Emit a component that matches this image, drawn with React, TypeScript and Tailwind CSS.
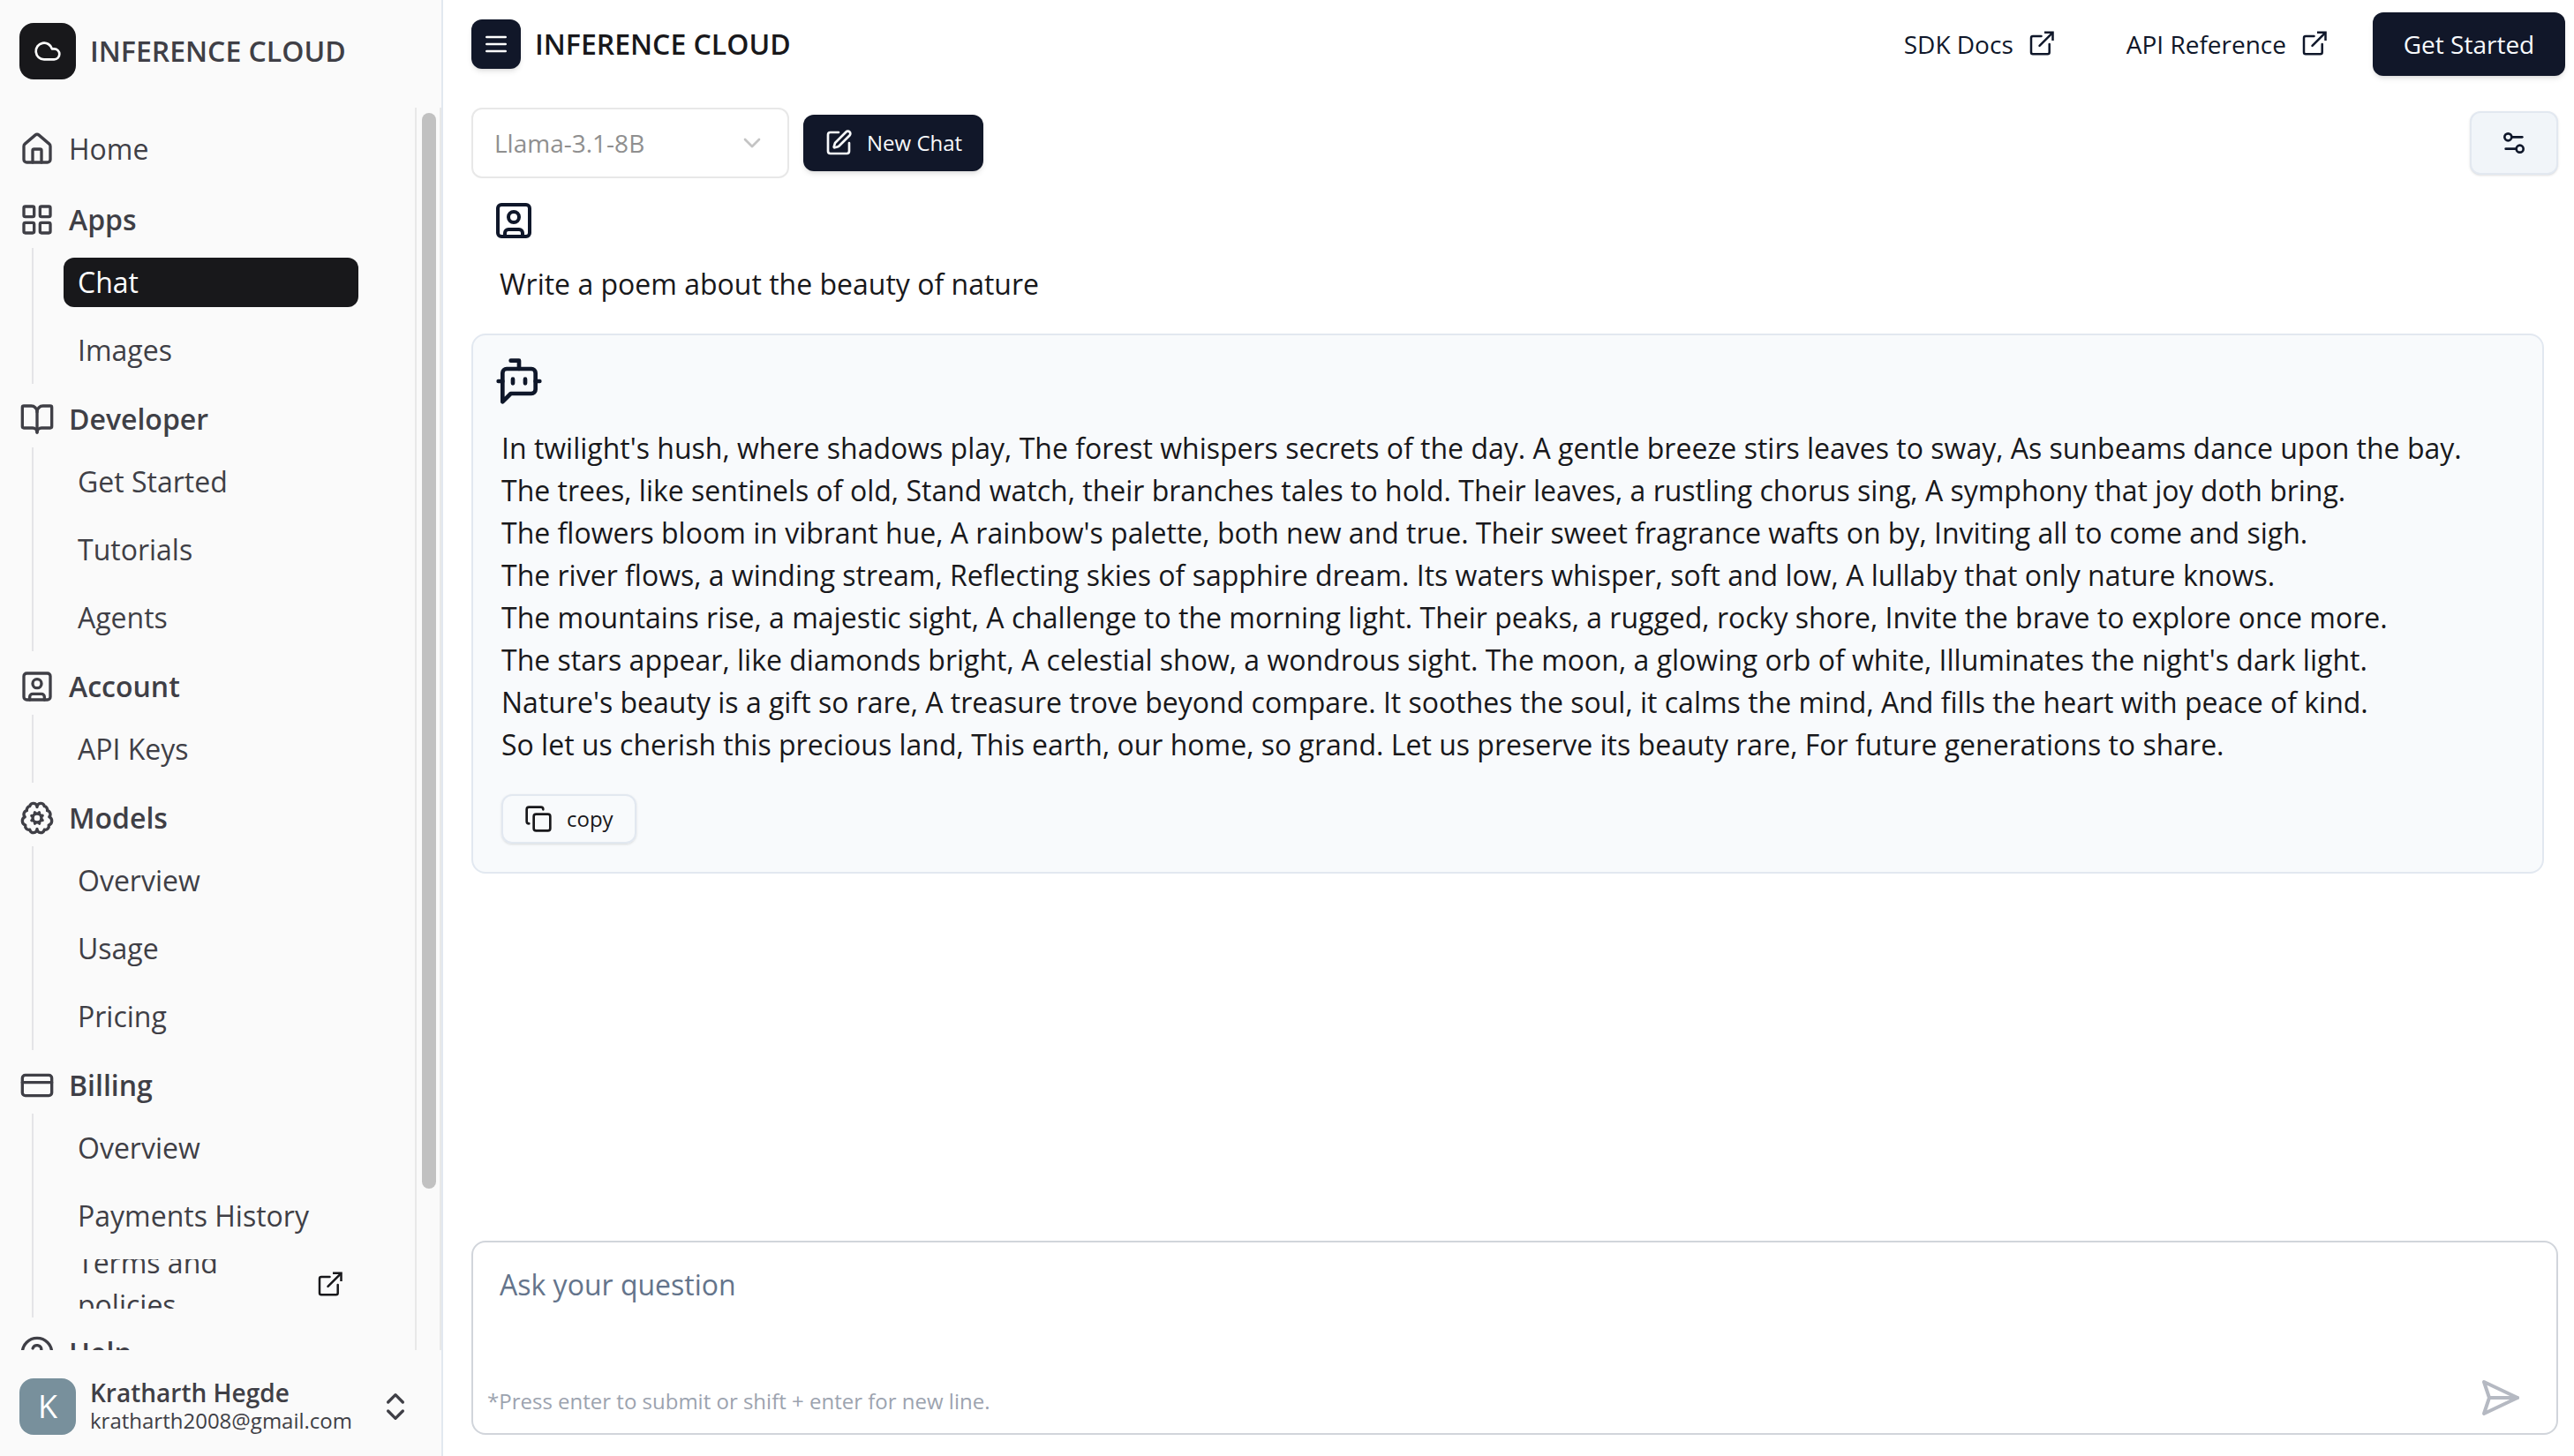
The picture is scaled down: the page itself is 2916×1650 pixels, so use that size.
import type { ComponentType, ReactNode } from 'react';
import {
  BookOpen,
  ChevronDown,
  ChevronsUpDown,
  CircleQuestionMark,
  Cloud,
  Copy,
  CreditCard,
  House,
  LayoutGrid,
  Settings2,
  SquarePen,
  SquareUser,
} from 'lucide-react';

type IconProps = { className?: string };

function StrokeIcon({ className, children }: { className?: string; children: ReactNode }) {
  return (
    <svg
      viewBox="0 0 24 24"
      fill="none"
      stroke="currentColor"
      strokeWidth="2"
      strokeLinecap="round"
      strokeLinejoin="round"
      aria-hidden="true"
      className={className}
    >
      {children}
    </svg>
  );
}

function BrainGear({ className }: IconProps) {
  return (
    <StrokeIcon className={className}>
      <path d="M12 4.5a2.5 2.5 0 0 0-4.96-.46 2.5 2.5 0 0 0-1.98 3 2.5 2.5 0 0 0-1.32 4.24 3 3 0 0 0 .34 5.58 2.5 2.5 0 0 0 2.96 3.08A2.5 2.5 0 0 0 12 19.5a2.5 2.5 0 0 0 4.96.44 2.5 2.5 0 0 0 2.96-3.08 3 3 0 0 0 .34-5.58 2.5 2.5 0 0 0-1.32-4.24 2.5 2.5 0 0 0-1.98-3A2.5 2.5 0 0 0 12 4.5" />
      <circle cx="12" cy="12" r="3" />
      <path d="m15.7 10.4-.9.4M9.2 13.2l-.9.4M13.6 15.7l-.4-.9M10.8 9.2l-.4-.9M15.7 13.5l-.9-.4M9.2 10.9l-.9-.4M10.5 15.7l.4-.9M13.1 9.2l.4-.9" />
    </StrokeIcon>
  );
}

function BotMessage({ className }: IconProps) {
  return (
    <StrokeIcon className={className}>
      <path d="M12 6V2H8" />
      <path d="m8 18-4 4V8a2 2 0 0 1 2-2h12a2 2 0 0 1 2 2v8a2 2 0 0 1-2 2Z" />
      <path d="M2 12h2M9 11v2M15 11v2M20 12h2" />
    </StrokeIcon>
  );
}

function SendArrow({ className }: IconProps) {
  return (
    <StrokeIcon className={className}>
      <path d="m3 3 3 9-3 9 19-9Z" />
      <path d="M6 12h16" />
    </StrokeIcon>
  );
}

function MenuLines({ className }: IconProps) {
  return (
    <StrokeIcon className={className}>
      <path d="M4 6h16M4 12h16M4 18h16" />
    </StrokeIcon>
  );
}

function OpenExternal({ className }: IconProps) {
  return (
    <svg
      viewBox="0 0 32 32"
      fill="none"
      stroke="currentColor"
      strokeWidth="2.5"
      aria-hidden="true"
      className={className}
    >
      <path
        strokeLinecap="round"
        strokeLinejoin="round"
        d="M15.5 8H6a2 2 0 0 0-2 2v16.3a2 2 0 0 0 2 2h16.7a2 2 0 0 0 2-2V17"
      />
      <path strokeLinecap="round" d="M13.5 18.8 28 4.3" />
      <path strokeLinejoin="miter" d="M19 3.7h9.5v9.3" />
    </svg>
  );
}

type NavItem = { label: string; active?: boolean; external?: boolean };
type NavGroup = { label: string; icon: ComponentType<IconProps>; items: NavItem[] };

const groups: NavGroup[] = [
  { label: 'Apps', icon: LayoutGrid, items: [{ label: 'Chat', active: true }, { label: 'Images' }] },
  {
    label: 'Developer',
    icon: BookOpen,
    items: [{ label: 'Get Started' }, { label: 'Tutorials' }, { label: 'Agents' }],
  },
  { label: 'Account', icon: SquareUser, items: [{ label: 'API Keys' }] },
  {
    label: 'Models',
    icon: BrainGear,
    items: [{ label: 'Overview' }, { label: 'Usage' }, { label: 'Pricing' }],
  },
  {
    label: 'Billing',
    icon: CreditCard,
    items: [
      { label: 'Overview' },
      { label: 'Payments History' },
      { label: 'Terms and policies', external: true },
    ],
  },
  { label: 'Help', icon: CircleQuestionMark, items: [] },
];

const poem = [
  "In twilight's hush, where shadows play, The forest whispers secrets of the day. A gentle breeze stirs leaves to sway, As sunbeams dance upon the bay.",
  'The trees, like sentinels of old, Stand watch, their branches tales to hold. Their leaves, a rustling chorus sing, A symphony that joy doth bring.',
  "The flowers bloom in vibrant hue, A rainbow's palette, both new and true. Their sweet fragrance wafts on by, Inviting all to come and sigh.",
  'The river flows, a winding stream, Reflecting skies of sapphire dream. Its waters whisper, soft and low, A lullaby that only nature knows.',
  'The mountains rise, a majestic sight, A challenge to the morning light. Their peaks, a rugged, rocky shore, Invite the brave to explore once more.',
  "The stars appear, like diamonds bright, A celestial show, a wondrous sight. The moon, a glowing orb of white, Illuminates the night's dark light.",
  "Nature's beauty is a gift so rare, A treasure trove beyond compare. It soothes the soul, it calms the mind, And fills the heart with peace of kind.",
  'So let us cherish this precious land, This earth, our home, so grand. Let us preserve its beauty rare, For future generations to share.',
];

function NavRow({ item }: { item: NavItem }) {
  return (
    <li className="flex h-[77px] items-center">
      <a
        href="#"
        aria-current={item.active ? 'page' : undefined}
        className={
          item.active
            ? 'flex h-14 w-full items-center rounded-xl bg-[#18181b] px-4 text-white'
            : 'flex h-14 w-full items-center justify-between overflow-hidden rounded-xl px-4'
        }
      >
        <span className={item.external ? 'w-44 leading-[48px]' : 'leading-[48px]'}>{item.label}</span>
        {item.external && <OpenExternal className="size-8 shrink-0 text-[#18181b]" />}
      </a>
    </li>
  );
}

function Sidebar() {
  return (
    <aside className="flex w-[502px] shrink-0 flex-col border-r-2 border-[#e2e8f0] bg-[#fafafa] text-[32px] text-[#3f3f46]">
      <div className="flex items-center gap-4 px-[22px] pt-[26px] pb-8 font-semibold">
        <span className="flex size-16 items-center justify-center rounded-2xl bg-[#18181b] text-white">
          <Cloud className="size-8" />
        </span>
        INFERENCE CLOUD
      </div>

      <div className="flex min-h-0 flex-1">
        <nav aria-label="Main" className="min-w-0 flex-1 overflow-hidden pt-[27px] pl-[22px]">
          <a href="#" className="mb-10 flex h-10 items-center gap-4 font-medium">
            <House className="size-10" />
            Home
          </a>
          {groups.map((group) => {
            const Icon = group.icon;
            return (
              <section key={group.label} className="mb-5">
                <h2 className="mb-3 flex h-10 items-center gap-4 font-semibold">
                  <Icon className="size-10" />
                  {group.label}
                </h2>
                <ul className="mr-16 ml-[14px] border-l-2 border-[#e4e4e7] pl-[34px]">
                  {group.items.map((item) => (
                    <NavRow key={item.label} item={item} />
                  ))}
                </ul>
              </section>
            );
          })}
        </nav>
        <div
          aria-hidden="true"
          className="flex w-[30px] flex-col border-x-2 border-[#e8e8e8] pt-[6px] pr-1 pl-[6px]"
        >
          <div className="flex-[20] rounded-full bg-[#c1c1c1]" />
          <div className="flex-[3]" />
        </div>
      </div>

      <div className="flex items-center gap-4 px-[22px] pt-8 pb-6">
        <span className="flex size-16 items-center justify-center rounded-2xl bg-[#78909c] text-4xl text-white">
          K
        </span>
        <div className="min-w-0 flex-1">
          <div className="text-[28px] leading-8 font-semibold">Kratharth Hegde</div>
          <div className="text-2xl leading-8">kratharth2008@gmail.com</div>
        </div>
        <button type="button" aria-label="Account menu" className="mr-[10px]">
          <ChevronsUpDown className="size-10" />
        </button>
      </div>
    </aside>
  );
}

function TopBar() {
  return (
    <header className="flex items-center py-[14px] pr-[10px] pl-8">
      <button
        type="button"
        aria-label="Toggle sidebar"
        className="flex size-14 items-center justify-center rounded-xl bg-[#111729] text-white shadow-md"
      >
        <MenuLines className="size-8" />
      </button>
      <h1 className="ml-4 text-[32px] leading-[48px] font-semibold text-[#18181b]">INFERENCE CLOUD</h1>
      <div className="ml-auto flex items-center text-[28px] font-medium text-[#0f172a]">
        <a href="#" className="mr-20 flex items-center gap-4">
          SDK Docs
          <OpenExternal className="mb-[2px] size-8" />
        </a>
        <a href="#" className="mr-[50px] flex items-center gap-4">
          API Reference
          <OpenExternal className="mb-[2px] size-8" />
        </a>
        <button
          type="button"
          className="flex h-[72px] w-[218px] items-center justify-center rounded-xl bg-[#111729] text-[#f8fafc] shadow-md"
        >
          Get Started
        </button>
      </div>
    </header>
  );
}

function Toolbar() {
  return (
    <div className="mt-[22px] flex items-center pr-[18px] pl-8">
      <div className="relative w-[360px]">
        <select
          aria-label="Model"
          disabled
          className="h-20 w-full appearance-none rounded-xl border-2 border-[#e8e8e8] bg-white pr-16 pl-6 text-[28px] text-[#8f8f8f] opacity-100"
        >
          <option>Llama-3.1-8B</option>
        </select>
        <ChevronDown className="pointer-events-none absolute top-6 right-[26px] size-8 text-[#c4c4c4]" />
      </div>
      <button
        type="button"
        className="ml-4 flex h-16 items-center gap-4 rounded-xl bg-[#111729] px-6 text-2xl font-medium text-[#f8fafc] shadow-md"
      >
        <SquarePen className="size-8" />
        New Chat
      </button>
      <button
        type="button"
        aria-label="Chat settings"
        className="ml-auto flex h-[72px] w-[100px] items-center justify-center rounded-xl border-2 border-[#e2e8f0] bg-[#f1f5f9] text-[#0f172a] shadow-sm"
      >
        <Settings2 className="size-8" />
      </button>
    </div>
  );
}

function Conversation() {
  return (
    <div className="mt-6 flex-1 pr-[34px] pl-8 text-[32px] leading-[48px] text-[#18181b]">
      <article className="px-6 pb-8">
        <SquareUser className="size-12 text-[#0f172a]" />
        <p className="mt-6 ml-2">Write a poem about the beauty of nature</p>
      </article>
      <article className="rounded-2xl border-2 border-[#e2e8f0] bg-[#f8fafc] px-6 pt-6 pb-8">
        <BotMessage className="size-14 text-[#0f172a]" />
        <div className="mt-6 ml-2">
          {poem.map((line) => (
            <p key={line}>{line}</p>
          ))}
          <button
            type="button"
            className="mt-8 flex h-14 items-center gap-4 rounded-xl border-2 border-[#e2e8f0] px-6 text-2xl font-medium shadow-sm"
          >
            <Copy className="size-8" />
            copy
          </button>
        </div>
      </article>
    </div>
  );
}

function Composer() {
  return (
    <form className="mr-[18px] mb-6 ml-8 flex h-[220px] flex-col rounded-2xl border-2 border-[#d1d5db] bg-white">
      <textarea
        aria-label="Ask your question"
        placeholder="Ask your question"
        className="min-h-0 flex-1 resize-none bg-transparent px-[30px] pt-6 text-[32px] leading-[48px] text-[#18181b] outline-none placeholder:text-[#64748b]"
      />
      <div className="flex items-end justify-between pr-10 pb-4 pl-4">
        <p className="text-2xl leading-10 text-[#9ca3af]">
          *Press enter to submit or shift + enter for new line.
        </p>
        <button type="submit" aria-label="Send" className="text-[#b5b9c2]">
          <SendArrow className="size-12" />
        </button>
      </div>
    </form>
  );
}

export default function App() {
  return (
    <div className="flex h-screen bg-white font-['Open_Sans',sans-serif]">
      <Sidebar />
      <main className="flex min-w-0 flex-1 flex-col">
        <TopBar />
        <Toolbar />
        <Conversation />
        <Composer />
      </main>
    </div>
  );
}
